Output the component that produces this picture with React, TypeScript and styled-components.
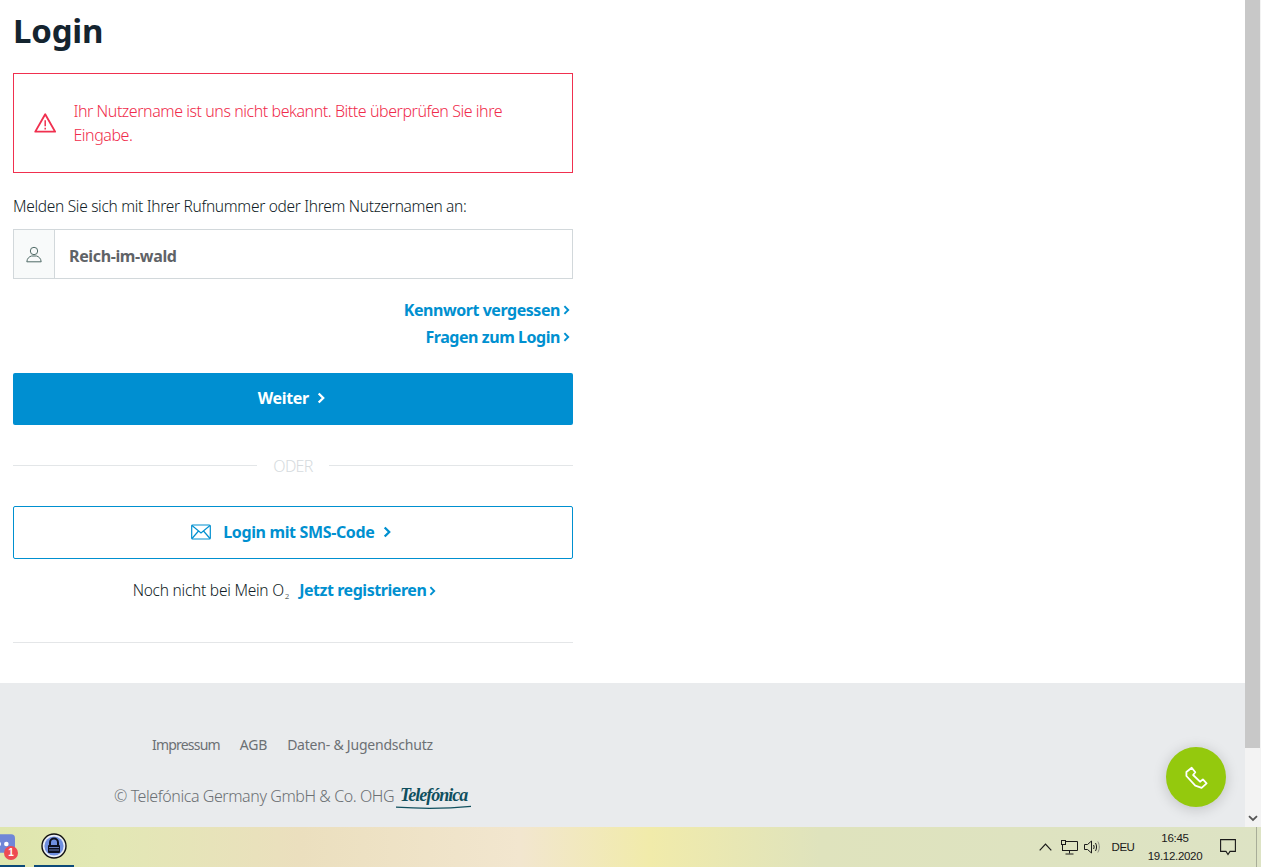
import React from "react";
import styled, { createGlobalStyle } from "styled-components";

const Global = createGlobalStyle`
  html, body { margin: 0; padding: 0; height: 100%; overflow: hidden; background: #fff; }
  * { box-sizing: border-box; }
  body { font-family: "Noto Sans", "Open Sans", Arial, sans-serif; color: #1d2a35; }
`;

const BLUE = "#0090d0";
const RED = "#f0304f";

const Screen = styled.div`
  width: 1261px; height: 867px; display: flex; flex-direction: column; position: relative; overflow: hidden;
`;
const Browser = styled.div`
  height: 827px; display: flex; flex: none;
`;
const Page = styled.div`
  flex: 1; display: flex; flex-direction: column; min-width: 0;
`;
const Content = styled.main`
  height: 683px; flex: none; padding: 0 0 0 13px;
`;
const Column = styled.div`
  width: 560px; display: flex; flex-direction: column;
`;
const Title = styled.h1`
  margin: 0; height: 73px; padding-top: 8px; font-size: 33px; line-height: 46px; font-weight: 700; color: #14242f;
  font-family: "Noto Sans", sans-serif; letter-spacing: -0.2px;
`;
const Alert = styled.div`
  height: 100px; border: 1px solid ${RED}; display: flex; align-items: center; padding: 0 40px 0 20px; gap: 17px;
`;
const AlertText = styled.p`
  margin: 0; color: #f02b4b; font-size: 16px; line-height: 24px; font-weight: 300; letter-spacing: -0.45px;
`;
const Label = styled.p`
  margin: 0; height: 56px; padding-top: 21px; font-size: 15.5px; line-height: 24px; letter-spacing: -0.3px; color: #101c26; font-weight: 300;
`;
const Field = styled.div`
  height: 50px; border: 1px solid #d2d8db; display: flex; align-items: stretch;
`;
const FieldIcon = styled.div`
  width: 41px; flex: none; background: #f8fafa; border-right: 1px solid #d2d8db; display: flex; align-items: center; justify-content: center;
`;
const FieldValue = styled.div`
  flex: 1; padding: 4px 0 0 14px; display: flex; align-items: center; font-size: 16px; font-weight: 700; color: #5f6367; letter-spacing: -0.36px;
`;
const LinkStack = styled.div`
  display: flex; flex-direction: column; align-items: flex-end; padding: 17px 3px 0 0; height: 94px;
`;
const TextLink = styled.a`
  display: inline-flex; align-items: center; gap: 3px; height: 27px; color: ${BLUE}; font-size: 16px; font-weight: 700; letter-spacing: -0.45px; white-space: nowrap;
`;
const Primary = styled.button`
  height: 52px; border: 0; border-radius: 2px; background: #008fd1; color: #fff; font: 700 16px "Noto Sans", sans-serif; letter-spacing: -0.3px;
  display: flex; align-items: center; justify-content: center; gap: 8px; padding: 0 3px 2px 0;
`;
const Or = styled.div`
  height: 81px; display: flex; align-items: center; gap: 16px; color: #d6dbde; font-size: 16px; font-weight: 300; letter-spacing: -0.7px;
  &::before, &::after { content: ""; flex: 1; height: 1px; background: #e3e6e8; }
`;
const Secondary = styled.button`
  height: 53px; border: 1px solid ${BLUE}; border-radius: 2px; background: #fff; color: ${BLUE}; font: 700 16px "Noto Sans", sans-serif; letter-spacing: -0.36px;
  display: flex; align-items: center; justify-content: center; gap: 9px; padding: 0 3px 2px 0;
`;
const MailIcon = styled.svg`
  margin-right: 3px;
`;
const Register = styled.div`
  height: 84px; padding-top: 18px; border-bottom: 1px solid #e4e6e8; display: flex; justify-content: center; align-items: flex-start; gap: 10px;
  font-size: 15.5px; letter-spacing: -0.24px; line-height: 27px; padding-right: 17px; font-weight: 300; color: #101c26;
`;
const Sub = styled.sub`
  font-size: 8px; line-height: 0; vertical-align: -3px; margin-left: 1px;
`;
const Footer = styled.footer`
  flex: 1; background: #e9ebed; display: flex; flex-direction: column; padding-top: 51px; color: #6c7074;
`;
const FooterLinks = styled.nav`
  display: flex; gap: 20px; padding-left: 152px; font-size: 14px; line-height: 22px; height: 41px;
`;
const FooterLink = styled.a<{ $spacing: number }>`
  letter-spacing: ${p => p.$spacing}px;
`;
const Copyright = styled.div`
  display: flex; align-items: center; padding: 2px 0 0 114px; font-size: 16px; line-height: 24px; font-weight: 300; letter-spacing: -0.42px; height: 40px; gap: 2px;
`;
const Logo = styled.span`
  position: relative; display: inline-block; width: 75px; height: 26px; text-align: center; color: #0f4f5e;
  font: italic 700 18px/25px "Liberation Serif", serif; letter-spacing: -1px;
  svg { position: absolute; left: 0; bottom: 0; }
`;
const Scrollbar = styled.div`
  width: 16px; flex: none; background: #f3f3f3; display: flex; flex-direction: column; position: relative;
`;
const Thumb = styled.div`
  width: 15px; height: 748px; background: #c8c8c8;
`;
const ArrowBox = styled.div`
  position: absolute; bottom: 0; left: 0; width: 16px; height: 18px; display: flex; align-items: center; justify-content: center;
`;
const Fab = styled.div`
  position: absolute; left: 1166px; top: 747px; width: 60px; height: 60px; border-radius: 50%; background: #94c90d;
  box-shadow: 0 2px 14px rgba(0,0,0,.18); display: flex; align-items: center; justify-content: center;
`;
const Taskbar = styled.div`
  height: 40px; flex: none; display: flex; align-items: center; position: relative;
  background: linear-gradient(90deg, #dfe6ae 0px, #e2e8b4 100px, #ebdfbe 300px, #f2e6cf 520px, #f1ebaa 650px, #dfe3bd 820px, #dde3c4 1261px);
  font-family: "Liberation Sans", Arial, sans-serif; color: #1a1a1a;
`;
const Apps = styled.div`
  display: flex; align-items: stretch; height: 40px; margin-left: -10px; gap: 9px; flex: 1;
`;
const AppSlot = styled.div<{ $w: number; $right?: number; $bottom?: number }>`
  width: ${p => p.$w}px; position: relative; display: flex; align-items: center; justify-content: center;
  padding: 0 ${p => p.$right ?? 0}px ${p => p.$bottom ?? 1}px 0;
  border-bottom: 2px solid #0c4a78;
`;
const Badge = styled.span`
  position: absolute; left: 14px; top: 19px; width: 14px; height: 14px; border-radius: 50%; background: #ee4a52; color: #fff; font: 700 10px/14px "Liberation Sans", sans-serif; text-align: center;
`;
const Tray = styled.div`
  display: flex; align-items: center; height: 40px; padding-right: 14px;
`;
const TrayIcon = styled.div<{ $w: number }>`
  width: ${p => p.$w}px; display: flex; align-items: center; justify-content: center;
`;
const Lang = styled.span`
  width: 38px; padding-left: 2px; font-size: 11.5px; text-align: center; letter-spacing: -0.5px;
`;
const Clock = styled.div`
  width: 68px; font-size: 11.5px; line-height: 18px; text-align: center; letter-spacing: -0.3px;
`;
const Sep = styled.div`
  position: absolute; left: 1256px; top: 0; bottom: 0; width: 1px; background: #a8ad98;
`;

const Chevron = ({ color, size = 10 }: { color: string; size?: number }) => (
  <svg width={size * 0.7} height={size} viewBox="0 0 7 10" fill="none">
    <path d="M1.4 1.2 5.2 5 1.4 8.8" stroke={color} strokeWidth="1.9" />
  </svg>
);

export default function App() {
  return (
    <Screen>
      <Global />
      <Browser>
        <Page>
          <Content>
            <Column>
              <Title>Login</Title>
              <Alert>
                <svg width="24" height="22" viewBox="0 0 24 22" fill="none" stroke={RED} strokeWidth="2" strokeLinejoin="round">
                  <path d="M12 1.6 1.4 20.200h21.200L12 1.600Z" />
                  <path d="M12 8v6.500M12 16.200v1.800" strokeWidth="1.600" />
                </svg>
                <AlertText>Ihr Nutzername ist uns nicht bekannt. Bitte überprüfen Sie ihre Eingabe.</AlertText>
              </Alert>
              <Label>Melden Sie sich mit Ihrer Rufnummer oder Ihrem Nutzernamen an:</Label>
              <Field>
                <FieldIcon>
                  <svg width="16" height="17" viewBox="0 0 16 17" fill="none" stroke="#4f6a66" strokeWidth="1">
                    <circle cx="8" cy="5" r="3.700" />
                    <path d="M.8 15.800c.3-3.600 2.600-5.300 4.700-5.800h5c2.100.5 4.400 2.200 4.700 5.800H.8Z" />
                  </svg>
                </FieldIcon>
                <FieldValue>Reich-im-wald</FieldValue>
              </Field>
              <LinkStack>
                <TextLink>Kennwort vergessen<Chevron color={BLUE} /></TextLink>
                <TextLink>Fragen zum Login<Chevron color={BLUE} /></TextLink>
              </LinkStack>
              <Primary>Weiter<Chevron color="#fff" size={12} /></Primary>
              <Or><span>ODER</span></Or>
              <Secondary>
                <MailIcon width="20" height="16" viewBox="0 0 20 16" fill="none" stroke={BLUE} strokeWidth="1.200">
                  <rect x=".7" y="1" width="18.600" height="14" rx="1" />
                  <path d="m1 1.500 9 7.500 9-7.500M1 14.500l6.500-7.500M19 14.500 12.500 7" />
                </MailIcon>
                Login mit SMS-Code<Chevron color={BLUE} size={12} />
              </Secondary>
              <Register>
                <span>Noch nicht bei Mein O<Sub>2</Sub></span>
                <TextLink>Jetzt registrieren<Chevron color={BLUE} /></TextLink>
              </Register>
            </Column>
          </Content>
          <Footer>
            <FooterLinks>
              <FooterLink $spacing={-0.8}>Impressum</FooterLink>
              <FooterLink $spacing={-0.22}>AGB</FooterLink>
              <FooterLink $spacing={-0.22}>Daten- &amp; Jugendschutz</FooterLink>
            </FooterLinks>
            <Copyright>
              <span>© Telefónica Germany GmbH &amp; Co. OHG</span>
              <Logo>
                Telefónica
                <svg width="75" height="5" viewBox="0 0 75 5" fill="none"><path d="M0 3.200C22 4.600 52 4.600 75 2.400" stroke="#0f4f5e" strokeWidth="1.200" /></svg>
              </Logo>
            </Copyright>
          </Footer>
        </Page>
        <Scrollbar>
          <Thumb />
          <ArrowBox>
            <svg width="10" height="7" viewBox="0 0 10 7" fill="none"><path d="M1 1.200 5 5l4-3.800" stroke="#555" strokeWidth="1.800" /></svg>
          </ArrowBox>
        </Scrollbar>
      </Browser>
      <Fab>
        <svg width="24" height="24" viewBox="0 0 24 24" fill="none" stroke="#fff" strokeWidth="1.800" strokeLinejoin="round">
          <path d="M2.400 7 7.700 2.800l3.600 4.500-2.200 2.700L16 16.700l2.900-2.300 3.700 3.900-5 4.500-6.300-2.100-8.900-9.700Z" />
        </svg>
      </Fab>
      <Taskbar>
        <Apps>
          <AppSlot $w={35} $right={10} $bottom={5}>
            <svg width="26" height="19" viewBox="0 0 26 19"><rect x="0" y="0" width="26" height="19" rx="4" fill="#6f86d8" /><circle cx="9" cy="10" r="2.400" fill="#fff" /><circle cx="17" cy="10" r="2.400" fill="#fff" /></svg>
            <Badge>1</Badge>
          </AppSlot>
          <AppSlot $w={40}>
            <svg width="26" height="26" viewBox="0 0 26 26">
              <circle cx="13" cy="13" r="12" fill="#e8ecf5" stroke="#111" strokeWidth="1.400" />
              <circle cx="13" cy="13" r="9.600" fill="#6f8fe0" />
              <path d="M9 12V9.500a4 4 0 0 1 8 0V12" fill="none" stroke="#0c1020" strokeWidth="2" />
              <rect x="7" y="12" width="12" height="8" rx="1" fill="#0c1020" />
              <path d="M8 14.500h10M8 17h10" stroke="#7a94dc" strokeWidth=".8" />
            </svg>
          </AppSlot>
        </Apps>
        <Tray>
          <TrayIcon $w={24}><svg width="13" height="8" viewBox="0 0 13 8" fill="none"><path d="M.7 7.300 6.500 1.200l5.800 6.100" stroke="#1a1a1a" strokeWidth="1.200" /></svg></TrayIcon>
          <TrayIcon $w={24}>
            <svg width="17" height="15" viewBox="0 0 17 15" fill="none" stroke="#1a1a1a" strokeWidth="1"><path d="M4 1.500h12.500v9H1M8.500 10.500v3M4.500 14h8" /><path d="M1.500 4.500v6" /><rect x=".5" y=".5" width="4" height="4" /></svg>
          </TrayIcon>
          <TrayIcon $w={22}>
            <svg width="17" height="14" viewBox="0 0 17 14" fill="none" stroke="#1a1a1a" strokeWidth="1"><path d="M.5 4.500h3L7.500 1v12l-4-3.500h-3v-5Z" /><path d="M9.500 5c.8 1.200.8 2.800 0 4M11.500 3c1.400 2.500 1.400 5.500 0 8" /><path d="M13.800 1.500c2 3.500 2 7.500 0 11" stroke="#8a8a80" /></svg>
          </TrayIcon>
          <Lang>DEU</Lang>
          <Clock>16:45<br />19.12.2020</Clock>
          <TrayIcon $w={38}>
            <svg width="16" height="17" viewBox="0 0 16 17" fill="none" stroke="#1a1a1a" strokeWidth="1.100"><path d="M.6.600h14.800v11.800H10L8 15.500l-2-3.100H.6V.600Z" /></svg>
          </TrayIcon>
        </Tray>
        <Sep />
      </Taskbar>
    </Screen>
  );
}
